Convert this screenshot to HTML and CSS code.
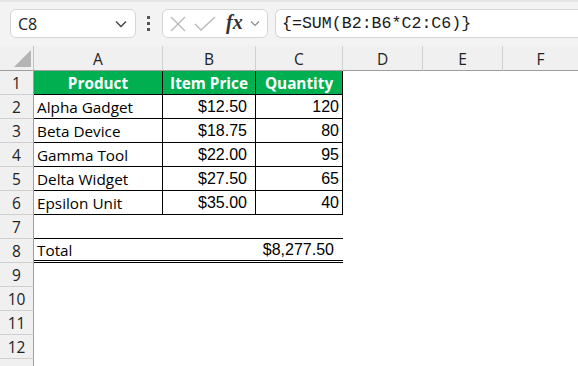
FILE: index.html
```html
<!DOCTYPE html>
<html lang="en">
<head>
  <meta charset="UTF-8">
  <title>Sheet</title>
  <link rel="stylesheet" href="styles.css">
</head>
<body>
  <div class="toolbar">
    <div class="name-box">
      <span>C8</span>
      <svg class="chev" width="12" height="8" viewBox="0 0 12 8"><polyline points="1,1.5 6,6.5 11,1.5" fill="none" stroke="#444" stroke-width="1.4"/></svg>
    </div>
    <div class="dots"><i></i><i></i><i></i></div>
    <div class="fx-box">
      <svg width="18" height="18" viewBox="0 0 18 18"><path d="M2 2 L16 16 M16 2 L2 16" stroke="#b8b8b8" stroke-width="1.3" fill="none"/></svg>
      <svg width="22" height="18" viewBox="0 0 22 18"><polyline points="1,9 7,15 21,2" stroke="#b8b8b8" stroke-width="1.3" fill="none"/></svg>
      <span class="fx">fx</span>
      <svg width="10" height="7" viewBox="0 0 10 7"><polyline points="1,1.5 5,5.5 9,1.5" fill="none" stroke="#888" stroke-width="1.1"/></svg>
    </div>
    <div class="formula">{=SUM(B2:B6*C2:C6)}</div>
  </div>

  <div class="sheet">
    <div class="corner"><span class="tri"></span></div>
    <div class="col-head">A</div>
    <div class="col-head">B</div>
    <div class="col-head">C</div>
    <div class="col-head">D</div>
    <div class="col-head">E</div>
    <div class="col-head last">F</div>

    <div class="row-head">1</div>
    <div class="cell th box">Product</div>
    <div class="cell th box">Item Price</div>
    <div class="cell th box">Quantity</div>
    <div class="cell"></div><div class="cell"></div><div class="cell"></div>

    <div class="row-head">2</div>
    <div class="cell box">Alpha Gadget</div>
    <div class="cell box num price">$12.50</div>
    <div class="cell box num">120</div>
    <div class="cell"></div><div class="cell"></div><div class="cell"></div>

    <div class="row-head">3</div>
    <div class="cell box">Beta Device</div>
    <div class="cell box num price">$18.75</div>
    <div class="cell box num">80</div>
    <div class="cell"></div><div class="cell"></div><div class="cell"></div>

    <div class="row-head">4</div>
    <div class="cell box">Gamma Tool</div>
    <div class="cell box num price">$22.00</div>
    <div class="cell box num">95</div>
    <div class="cell"></div><div class="cell"></div><div class="cell"></div>

    <div class="row-head">5</div>
    <div class="cell box">Delta Widget</div>
    <div class="cell box num price">$27.50</div>
    <div class="cell box num">65</div>
    <div class="cell"></div><div class="cell"></div><div class="cell"></div>

    <div class="row-head">6</div>
    <div class="cell box">Epsilon Unit</div>
    <div class="cell box num price">$35.00</div>
    <div class="cell box num">40</div>
    <div class="cell"></div><div class="cell"></div><div class="cell"></div>

    <div class="row-head">7</div>
    <div class="cell under"></div>
    <div class="cell under"></div>
    <div class="cell under"></div>
    <div class="cell"></div><div class="cell"></div><div class="cell"></div>

    <div class="row-head">8</div>
    <div class="cell total">Total</div>
    <div class="cell total"></div>
    <div class="cell total num sum">$8,277.50</div>
    <div class="cell"></div><div class="cell"></div><div class="cell"></div>

    <div class="row-head">9</div>
    <div class="cell"></div><div class="cell"></div><div class="cell"></div>
    <div class="cell"></div><div class="cell"></div><div class="cell"></div>

    <div class="row-head">10</div>
    <div class="cell"></div><div class="cell"></div><div class="cell"></div>
    <div class="cell"></div><div class="cell"></div><div class="cell"></div>

    <div class="row-head">11</div>
    <div class="cell"></div><div class="cell"></div><div class="cell"></div>
    <div class="cell"></div><div class="cell"></div><div class="cell"></div>

    <div class="row-head">12</div>
    <div class="cell"></div><div class="cell"></div><div class="cell"></div>
    <div class="cell"></div><div class="cell"></div><div class="cell"></div>

    <!-- row 13, only its top edge shows -->
    <div class="row-head"></div>
    <div class="cell"></div><div class="cell"></div><div class="cell"></div>
    <div class="cell"></div><div class="cell"></div><div class="cell"></div>
  </div>
</body>
</html>
```

FILE: styles.css
```css
* {
  box-sizing: border-box;
}

body {
  margin: 0;
  background: #fff;
  font-family: 'Open Sans', sans-serif;
  color: #000;
  overflow: hidden;
}

/* toolbar */
.toolbar {
  display: flex;
  align-items: center;
  height: 46px;
  padding: 8px 0 9px 10px;
  background: #f3f3f3;
  border-top: 2px solid #e6e6e6;
}

.name-box, .fx-box, .formula {
  height: 29px;
  background: #fff;
  border: 1px solid #d6d6d6;
  border-radius: 6px;
}

.name-box {
  width: 126px;
  display: flex;
  align-items: center;
  justify-content: space-between;
  padding: 0 8px 0 7px;
  font-size: 16px;
  color: #222;
}

.dots {
  display: flex;
  flex-direction: column;
  gap: 3px;
  margin: 0 12px 0 11px;
}

.dots i {
  width: 3px;
  height: 3px;
  background: #555;
}

.fx-box {
  width: 106px;
  display: flex;
  align-items: center;
  gap: 7px;
  padding-left: 6px;
}

.fx {
  font-family: 'Liberation Serif', serif;
  font-style: italic;
  font-weight: bold;
  font-size: 20px;
  color: #333;
  margin-left: 3px;
  margin-top: -3px;
}

.formula {
  flex: 1;
  margin-left: 7px;
  border-right: none;
  border-radius: 6px 0 0 6px;
  padding: 1px 0 0 6px;
  font-family: 'Liberation Mono', monospace;
  font-size: 16.6px;
  line-height: 26px;
  color: #1a1a1a;
}

/* sheet */
.sheet {
  display: grid;
  grid-template-columns: 34px 129px 93px 87px 80px 80px 1fr;
  grid-auto-rows: 24px;
  grid-template-rows: 25px;
}

.corner, .col-head, .row-head {
  background: #f0f0f0;
  font-size: 15.5px;
  color: #222;
}

.corner {
  position: relative;
  border-right: 1px solid #c4c4c4;
  border-bottom: 1px solid #9e9e9e;
}

.tri {
  position: absolute;
  right: 2px;
  bottom: 3px;
  width: 0;
  height: 0;
  border-left: 17px solid transparent;
  border-bottom: 17px solid #b4b4b4;
}

.col-head {
  display: flex;
  justify-content: center;
  align-items: center;
  border-right: 1px solid #d0d0d0;
  border-bottom: 1px solid #9e9e9e;
  padding-top: 2px;
}

.col-head.last {
  border-right: none;
}

.row-head {
  display: flex;
  justify-content: center;
  align-items: center;
  border-right: 1px solid #9e9e9e;
  border-bottom: 1px solid #cfcfcf;
}

.cell {
  display: flex;
  align-items: center;
  padding: 1px 3px 0 3px;
  font-size: 15.3px;
  white-space: nowrap;
}

.box {
  border-right: 1px solid #000;
  border-bottom: 1px solid #000;
}

.th {
  background: #00b050;
  color: #fff;
  font-weight: bold;
  justify-content: center;
}

.num {
  justify-content: flex-end;
  font-family: 'Liberation Sans', sans-serif;
  font-size: 16px;
}

.price {
  padding-right: 8px;
}

.under {
  border-bottom: 1px solid #000;
}

.total {
  border-bottom: 3px double #000;
}

.sum {
  padding-right: 9px;
}
```
